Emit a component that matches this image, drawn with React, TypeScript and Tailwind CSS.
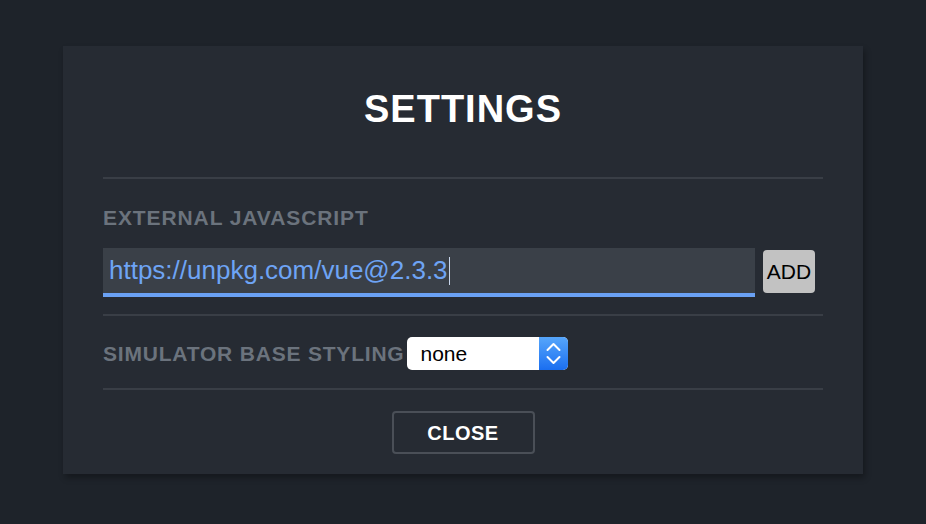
export default function App() {
  return (
    <div className="min-h-[524px] w-full bg-[#1e232a] pt-[46px] font-['Liberation_Sans',Arial,sans-serif]">
      <div className="mx-auto flex h-[428px] w-[800px] flex-col bg-[#262b33] px-10 shadow-[2px_4px_6px_rgba(0,0,0,0.3)]">
        <h1 className="pt-[45px] text-center text-[38px] font-bold leading-[37px] tracking-[1px] text-white">
          SETTINGS
        </h1>
        <div className="mt-[49px] h-[2px] bg-[#393e46]" />
        <div className="mt-[29px] text-[21px] font-bold leading-[20px] tracking-[0.9px] text-[#6b737d]">
          EXTERNAL JAVASCRIPT
        </div>
        <div className="mt-[20px] flex items-start gap-[8px]">
          <div className="flex h-[49px] w-[652px] items-center border-b-4 border-[#6aa1f4] bg-[#3a4048] pl-[6px] text-[26px] leading-[45px] text-[#6ea4f5]">
            <span>https://unpkg.com/vue@2.3.3</span>
            <span className="ml-[1px] inline-block h-[28px] w-px bg-[#c8d6ec]" />
          </div>
          <button className="mt-[2px] flex h-[43px] w-[52px] items-center justify-center rounded-[4px] bg-[#c2c2c2] text-[21px] leading-none text-black">
            ADD
          </button>
        </div>
        <div className="mt-[17px] h-[2px] bg-[#393e46]" />
        <div className="mt-[21px] flex h-[33px] items-center">
          <span className="text-[21px] font-bold leading-[20px] tracking-[0.8px] text-[#6b737d]">
            SIMULATOR BASE STYLING
          </span>
          <div className="ml-[2px] flex h-[33px] w-[161px] overflow-hidden rounded-[5px] bg-white">
            <div className="flex flex-1 items-center pl-[14px] text-[21px] leading-none text-black">none</div>
            <div className="flex w-[29px] items-center justify-center bg-gradient-to-b from-[#56a6fb] to-[#1a6ef0]">
              <svg width="29" height="33" viewBox="0 0 29 33" fill="none" stroke="white" strokeWidth="2" strokeLinecap="round" strokeLinejoin="round">
                <path d="M8.5 13 L14.5 7 L20.5 13" />
                <path d="M8.5 20 L14.5 26 L20.5 20" />
              </svg>
            </div>
          </div>
        </div>
        <div className="mt-[18px] h-[2px] bg-[#393e46]" />
        <button className="mx-auto mt-[21px] flex h-[43px] w-[143px] items-center justify-center rounded-[4px] border-2 border-[#4a4f57] text-[20px] font-bold leading-none tracking-[0.5px] text-white">
          CLOSE
        </button>
      </div>
    </div>
  );
}
